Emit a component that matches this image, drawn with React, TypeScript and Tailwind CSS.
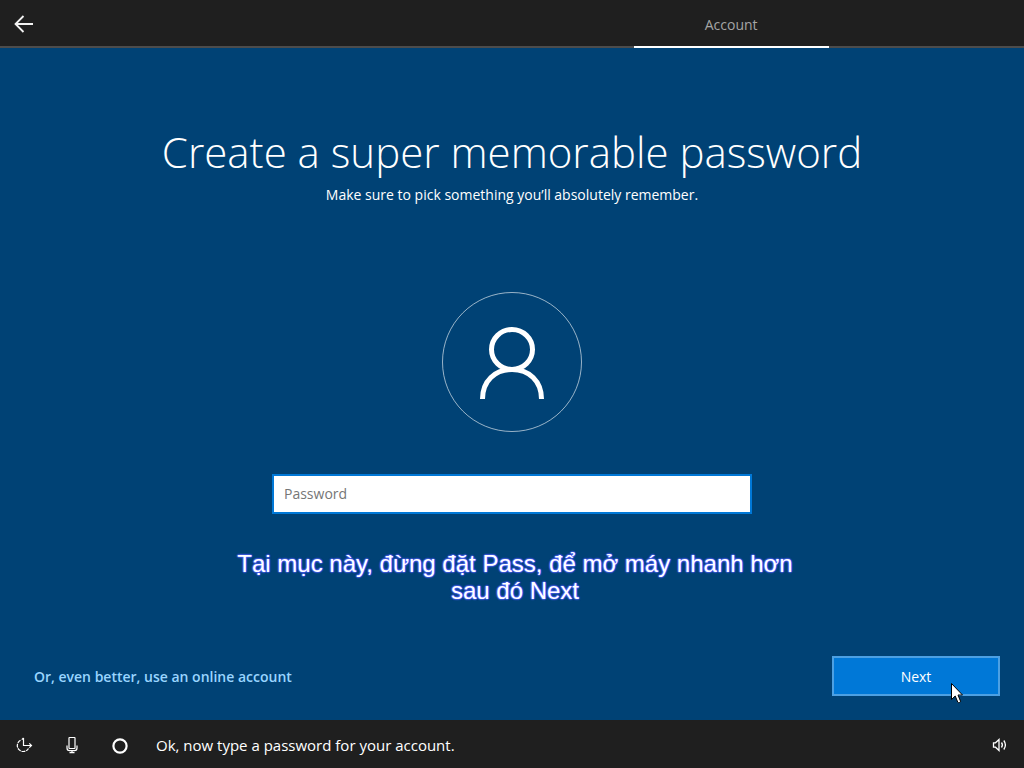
import React from 'react';

const BackArrow = () => (
  <svg width="20" height="18" viewBox="0 0 20 18" fill="none" stroke="#f2f2f2" strokeWidth="1.8">
    <path d="M19 9H1.5M9.5 1L1.5 9l8 8" />
  </svg>
);

const Header = () => {
  return (
    <header className="flex h-12 bg-[#1f1f1f] shadow-[inset_0_-2px_0_#4c4c4c]">
      <button aria-label="Back" className="flex w-12 items-center justify-center">
        <BackArrow />
      </button>
      <nav className="grid flex-1 grid-cols-5">
        <a
          href="#account"
          className="col-start-4 flex items-center justify-center border-b-2 border-white pt-1 text-sm text-[#a5a5a5]"
        >
          Account
        </a>
      </nav>
    </header>
  );
};

const Avatar = () => (
  <svg width="140" height="140" viewBox="0 0 140 140" fill="none" stroke="white" className="mx-auto mt-[86px]">
    <circle cx="70" cy="70" r="69.5" strokeOpacity="0.6" />
    <g strokeWidth="5">
      <ellipse cx="70" cy="57.5" rx="20.5" ry="20" />
      <path d="M40.5 107C40.5 89 53 77.5 70 77.5S99.5 89 99.5 107" />
    </g>
  </svg>
);

const EaseOfAccessIcon = () => (
  <svg width="18" height="18" viewBox="0 0 18 18" fill="none" stroke="white" strokeWidth="1.2">
    <path d="M5.500 4.200A6 6 0 1 0 13.500 12.500" strokeDasharray="3.800 .8" />
    <path d="M8.500 2v7.500H16.500M6.800 3.700L8.500 2M14.300 7.300l2.200 2.200-2.200 2.200" />
  </svg>
);

const MicIcon = () => (
  <svg width="12" height="18" viewBox="0 0 12 18" fill="none" stroke="white" strokeWidth="1.2">
    <rect x="3" y="1.500" width="6" height="11" rx=".5" />
    <path d="M1 9.500v2.500c0 1.800 1 2.700 2.500 2.700h5c1.500 0 2.500-.9 2.500-2.700V9.500M6 14.500v2M3.500 16.700h5" />
  </svg>
);

const CortanaIcon = () => (
  <svg width="16" height="18" viewBox="0 0 16 18" fill="none">
    <circle cx="8" cy="10" r="6.600" stroke="white" strokeWidth="2.200" />
  </svg>
);

const VolumeIcon = () => (
  <svg width="16" height="14" viewBox="0 0 16 14" fill="none" stroke="white" strokeWidth="1.300">
    <path d="M1.500 4.800h2L7 1.500v11L3.500 9.200h-2z" />
    <path d="M9.500 4.500q1.800 2.500 0 5M11.800 2.500q3.200 4.500 0 9" />
  </svg>
);

const Cursor = () => (
  <svg
    width="12"
    height="21"
    viewBox="0 0 12 21"
    className="pointer-events-none absolute top-[25px] left-[117px] overflow-visible"
  >
    <path d="M.5.5v16l3.700-3.500 2.600 6.200c.5 1 3 .2 2.700-1L7 12h4.500z" fill="white" stroke="black" />
  </svg>
);

const Footer = () => {
  return (
    <footer className="flex h-12 items-center bg-[#1f1f1f] pt-0.5">
      <button aria-label="Ease of access" className="flex w-12 justify-center">
        <EaseOfAccessIcon />
      </button>
      <button aria-label="Microphone" className="flex w-12 justify-center">
        <MicIcon />
      </button>
      <button aria-label="Cortana" className="flex w-12 justify-center">
        <CortanaIcon />
      </button>
      <p className="ml-3 flex-1 text-[15px]">Ok, now type a password for your account.</p>
      <button aria-label="Volume" className="flex w-12 justify-center">
        <VolumeIcon />
      </button>
    </footer>
  );
};

const App = () => {
  return (
    <div className="flex min-h-screen flex-col bg-[#004275] font-['Open_Sans',sans-serif] text-white">
      <Header />
      <main className="flex flex-1 flex-col px-6 pt-[74px] pb-6 text-center">
        <h1 className="pb-0.5 text-[42px] leading-[60px] font-light">Create a super memorable password</h1>
        <p className="text-sm leading-[22px]">Make sure to pick something you’ll absolutely remember.</p>
        <Avatar />
        <input
          type="password"
          placeholder="Password"
          aria-label="Password"
          className="mx-auto mt-[42px] h-10 w-full max-w-[480px] border-2 border-[#0078d7] bg-white px-2.5 pb-0.5 text-sm text-black outline-none placeholder:text-[#767676]"
        />
        <p className="mx-auto mt-9 w-full max-w-[600px] pl-1.5 font-['Liberation_Sans',sans-serif] text-2xl leading-[27px] text-shadow-[0_0_1px_#5060ff,0_0_1px_#5060ff,0_0_2px_#5060ff,0_0_2px_#5060ff,0_0_2px_#5060ff]">
          Tại mục này, đừng đặt Pass, để mở máy nhanh hơn sau đó Next
        </p>
        <div className="mt-auto flex items-center justify-between pl-2.5">
          <a href="#online" className="pt-0.5 text-sm font-semibold text-[#99d5ff]">
            Or, even better, use an online account
          </a>
          <button className="relative h-10 w-[168px] border-2 border-[#4ca0e3] bg-[#0078d7] pt-0.5 text-sm">
            Next
            <Cursor />
          </button>
        </div>
      </main>
      <Footer />
    </div>
  );
};

export default App;
